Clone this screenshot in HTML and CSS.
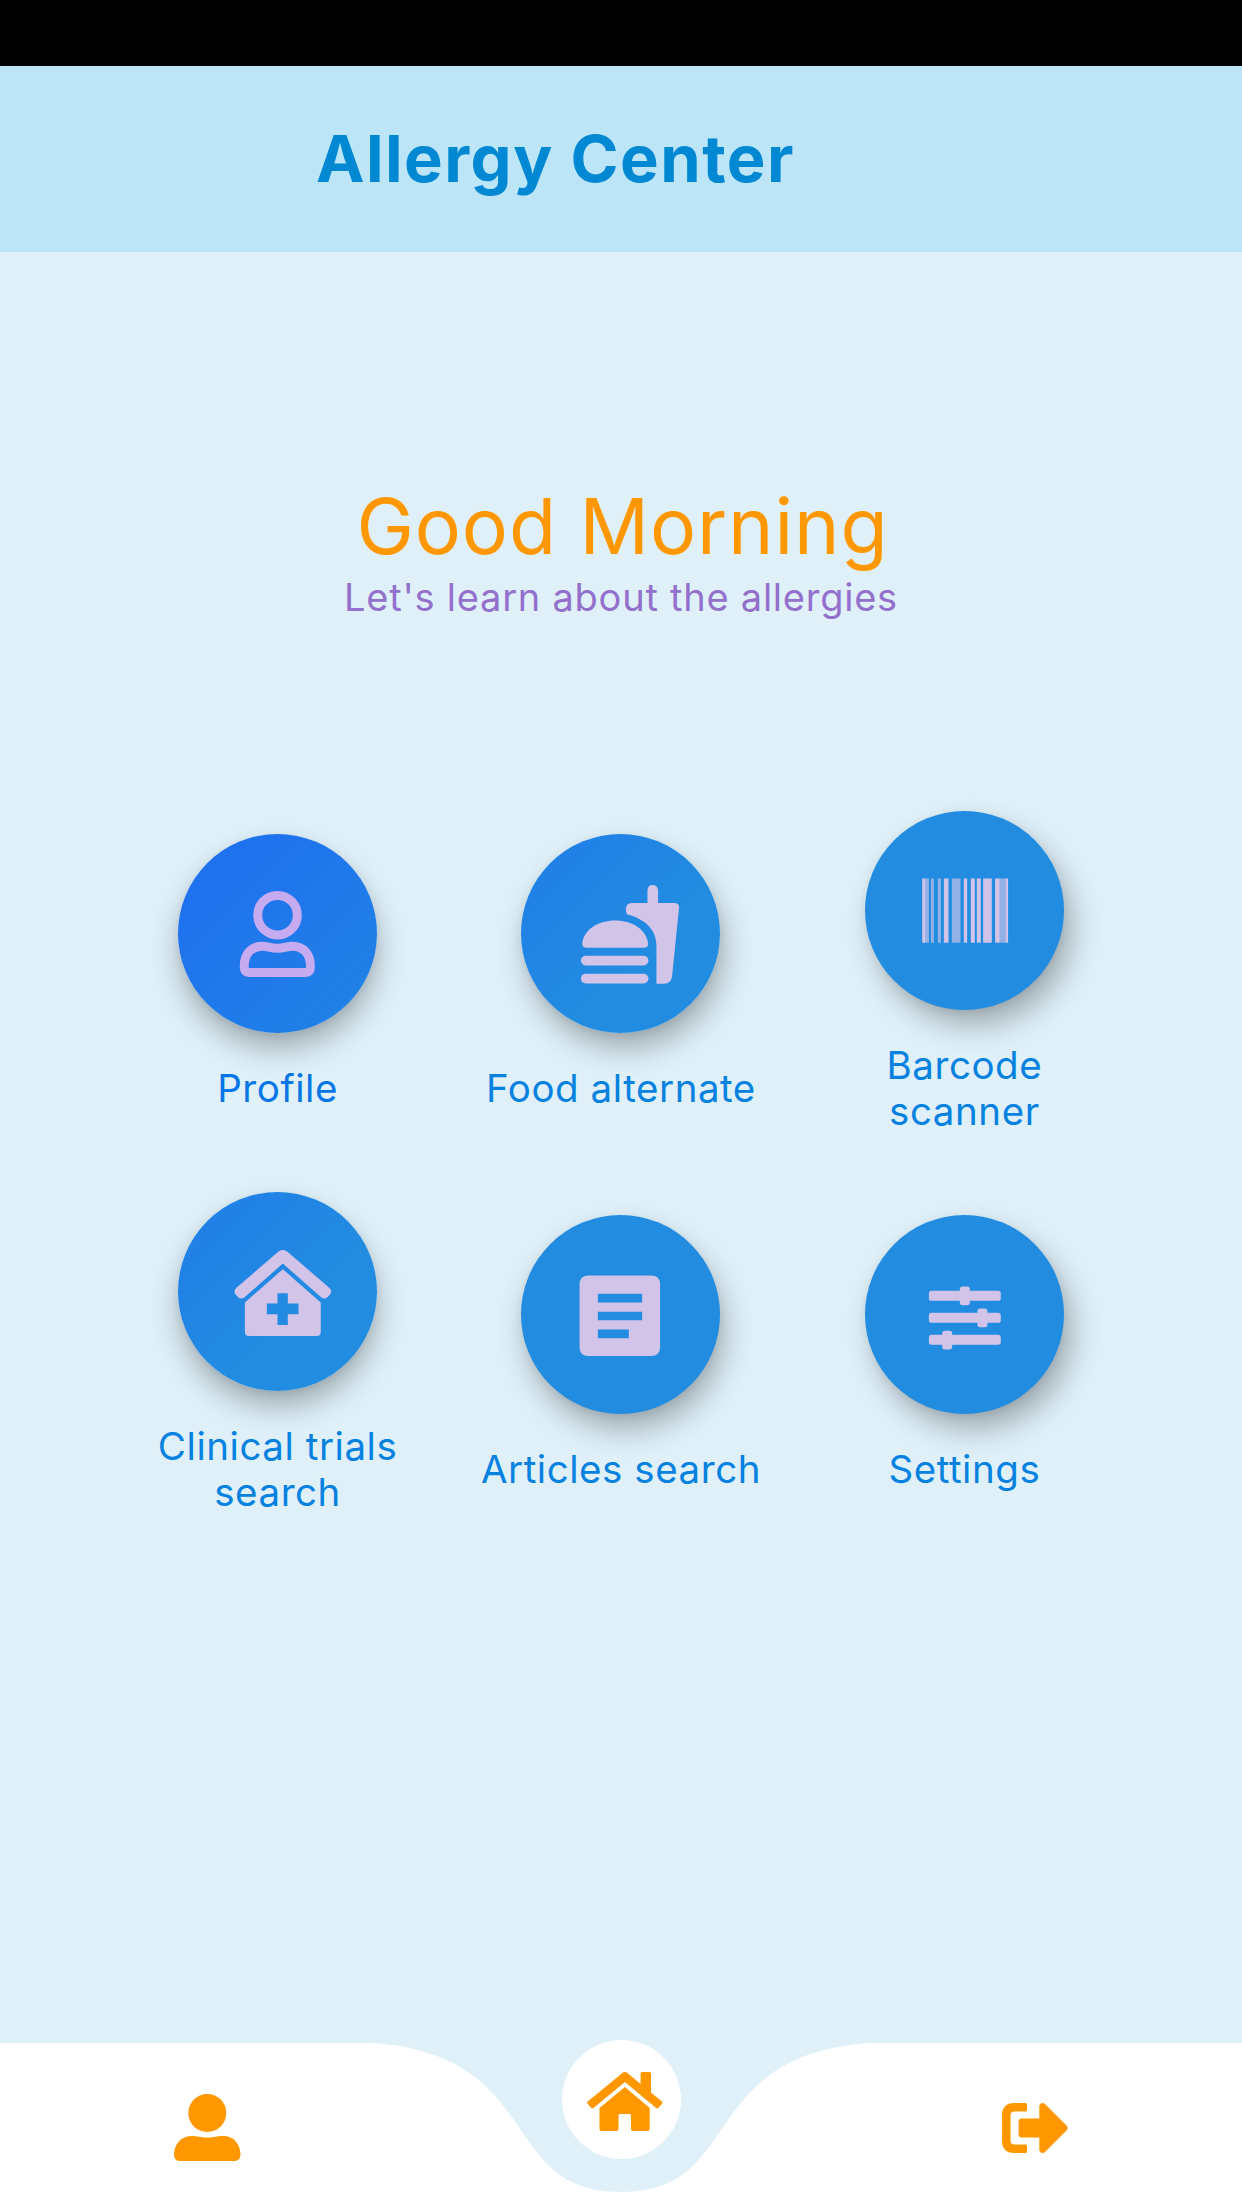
FILE: index.html
```
<!DOCTYPE html>
<html lang="en">
<head>
<meta charset="utf-8">
<title>Allergy Center</title>
<link rel="stylesheet" href="styles.css">
</head>
<body>
<div class="app">
  <div class="status-bar"></div>
  <header class="app-bar"><h1 class="title">Allergy Center</h1></header>

  <main class="content">
    <section class="greeting">
      <h2 class="greeting-title">Good Morning</h2>
      <p class="greeting-sub">Let's learn about the allergies</p>
    </section>

    <section class="menu">
      <a class="item left tint-profile">
        <svg class="disc" viewBox="85 70 598 598">
          <g fill="none" stroke="currentColor" stroke-width="27" stroke-linejoin="round">
            <circle cx="384" cy="314" r="59.5"/>
            <path d="M284 467C284 430 306 407 338 407C355 407 362 413 384 413C406 413 412 407 429 407C461 407 483 430 483 467C483 480 480 486 470 486H297C287 486 284 480 284 467Z"/>
          </g>
        </svg>
        <span class="label">Profile</span>
      </a>
      <a class="item center tint-mid">
        <svg class="disc" viewBox="185 70 598 598">
          <g fill="currentColor">
            <path d="M382 412Q369 412 369 399C373 357 418 330 468 330C518 330 562 357 567 399Q567 412 555 412Z"/>
            <rect x="365" y="436" width="203" height="29" rx="14.5"/>
            <rect x="365" y="490" width="203" height="29" rx="14.5"/>
            <path d="M565 277V238Q567 223 580 223Q595 223 597 238V277H648Q660 278 660 291L639 498Q636 519 614 520H592V405C592 358 558 325 503 311Q500 303 500 294Q502 278 517 277Z"/>
          </g>
        </svg>
        <span class="label">Food alternate</span>
      </a>
      <a class="item right">
        <svg class="disc" viewBox="75 61 598 598">
          <g fill="currentColor">
            <path d="M247 264h10v193h-10zM312 264h14v193h-14zM372 264h10v193h-10zM393 264h12v193h-12zM411 264h12v193h-12zM430 264h26v193h-26zM466 264h14v193h-14zM497 264h8v193h-8z"/>
            <path opacity=".65" d="M257 264h10v193h-10zM273 264h9v193h-9zM294 264h9v193h-9zM336 264h26v193h-26zM480 264h17v193h-17z"/>
          </g>
        </svg>
        <span class="label">Barcode<br>scanner</span>
      </a>
      <a class="item left tint-mid">
        <svg class="disc" viewBox="115 65 598 598">
          <path fill="currentColor" d="M418 243Q430 236 442 243L571 354Q579 363 572 373L564 381Q555 388 546 382L430 280L314 382Q304 388 296 381L288 373Q281 363 289 354Z"/>
          <path fill="currentColor" fill-rule="evenodd" d="M430 297L544 397V486Q544 498 532 498H328Q316 498 316 486V397ZM414 369V400H382V432H414V465H445V432H477V400H445V369Z"/>
        </svg>
        <span class="label">Clinical trials<br>search</span>
      </a>
      <a class="item center">
        <svg class="disc" viewBox="185 75 598 598">
          <path fill="currentColor" fill-rule="evenodd" d="M388 257H576Q603 257 603 284V472Q603 499 576 499H388Q361 499 361 472V284Q361 257 388 257ZM416 312V338H549V312ZM416 366V391H549V366ZM416 419V445H509V419Z"/>
        </svg>
        <span class="label">Articles search</span>
      </a>
      <a class="item right">
        <svg class="disc" viewBox="75 75 598 598">
          <g fill="currentColor">
            <rect x="267" y="303" width="216" height="30" rx="8"/>
            <rect x="267" y="369" width="216" height="30" rx="8"/>
            <rect x="267" y="435" width="216" height="30" rx="8"/>
            <rect x="360" y="290" width="30" height="56" rx="8"/>
            <rect x="413" y="356" width="30" height="56" rx="8"/>
            <rect x="307" y="423" width="30" height="56" rx="8"/>
          </g>
        </svg>
        <span class="label">Settings</span>
      </a>
    </section>
  </main>

  <nav class="nav">
    <svg class="nav-shape" viewBox="0 0 1242 166">
      <path fill="#fff" d="M0 0H372.6C546.5 12.4 496.8 149 621 149S695.5 12.4 869.4 0H1242V166H0Z"/>
    </svg>
    <a class="nav-item">
      <svg class="nav-user" viewBox="0 0 67 67">
        <circle cx="33.3" cy="19" r="19"/>
        <path d="M18 42C24 42 26 43.5 33.3 43.5S42 42 49 42C60 42 66.500 50 66.500 61Q66 67 60 67H6Q.5 67 0 61C0 50 7 42 18 42Z"/>
      </svg>
    </a>
    <a class="nav-item">
      <span class="home">
        <svg class="nav-home" viewBox="0 0 76 59">
          <path d="M34.8 1.4Q37.900-1.200 41 1.400L53.600 12V1.500Q53.600 0 55.100 0H62.500Q64 0 64 1.500V20.500L74.600 29.300Q76 30.500 74.800 32L71.500 35.700Q70.200 37 68.800 35.800L37.900 10L6.800 35.800Q5.400 37 4.100 35.700L.8 32Q-.4 30.500 1 29.300Z"/>
          <path d="M37.900 15L62.700 36V57Q62.700 59 60.700 59H46Q44 59 44 57V43.500Q44 42 42.500 42H33Q31.500 42 31.500 43.500V57Q31.500 59 29.500 59H14.500Q12.500 59 12.500 57V36Z"/>
        </svg>
      </span>
    </a>
    <a class="nav-item">
      <svg class="nav-exit" viewBox="0 0 66 50">
        <path d="M12.500 0H23.500Q25 0 25 1.500V7Q25 8.500 23.500 8.500H12.500Q8.500 8.500 8.500 12.500V37.500Q8.500 41.500 12.500 41.500H23.500Q25 41.500 25 43V48.500Q25 50 23.500 50H12.500Q0 50 0 37.500V12.500Q0 0 12.500 0Z"/>
        <path d="M19.500 15.600H37.300V3.500C37.300 0 41-1 43.300 1.200L64.500 22.500Q66.800 25 64.500 27.500L43.300 48.800C41 51 37.300 50 37.300 46.500V34.400H19.500Q16.600 34.400 16.600 31.500V18.500Q16.600 15.600 19.500 15.600Z"/>
      </svg>
    </a>
  </nav>
</div>
</body>
</html>
```
FILE: styles.css
```
* { box-sizing: border-box; margin: 0; padding: 0; }

body {
  font-family: Inter, "Liberation Sans", sans-serif;
  background: #dff0f9;
}

.app {
  width: 1242px;
  height: 2209px;
  display: flex;
  flex-direction: column;
  overflow: hidden;
}

.status-bar { height: 66px; background: #000; }

.app-bar {
  height: 186px;
  display: flex;
  align-items: center;
  padding: 0 0 1px 316px;
  background: #bce5f7;
}

.title {
  font-size: 65px;
  font-weight: 700;
  letter-spacing: 1.45px;
  color: #0088d2;
}

.content { flex: 1; padding-top: 227px; }

.greeting { height: 332px; text-align: center; }

.greeting-title {
  padding-left: 3px;
  font-size: 77px;
  line-height: 94px;
  font-weight: 400;
  letter-spacing: 0.9px;
  color: #ff9800;
}

.greeting-sub {
  margin-top: 1px;
  font-size: 38px;
  line-height: 46px;
  letter-spacing: 0.76px;
  color: #9370cc;
}

.menu {
  display: grid;
  grid-template-columns: repeat(3, 343.4px);
  justify-content: center;
  align-items: center;
  row-gap: 57.5px;
}

.item {
  display: flex;
  flex-direction: column;
  align-items: center;
  gap: 31.5px;
  --disc: #228ce1;
  --icon: #d2c4e8;
  --label: #0582e0;
  --shadow-x: 1px;
}

.item.center { --shadow-x: 5px; }
.item.right { --shadow-x: 9px; }

.tint-mid { --disc: linear-gradient(135deg, #207fe7 10%, #228ce1 60%); }

.tint-profile {
  --disc: linear-gradient(135deg, #1f70ef 12%, #2081e6 88%);
  --icon: #c6abf0;
  --label: #0576e5;
}

.disc {
  width: 199px;
  height: 199px;
  border-radius: 50%;
  background: var(--disc);
  color: var(--icon);
  box-shadow: var(--shadow-x) 16px 30px -2px rgba(0, 0, 0, 0.31), 0 2px 8px rgba(0, 0, 0, 0.06);
}

.label {
  font-size: 38.5px;
  line-height: 46.6px;
  letter-spacing: 0.55px;
  text-align: center;
  color: var(--label);
}

.nav {
  position: relative;
  height: 166px;
  display: grid;
  grid-template-columns: repeat(3, 1fr);
  justify-items: center;
}

.nav-shape {
  position: absolute;
  inset: 0;
  width: 1242px;
  height: 166px;
}

.nav-item { position: relative; fill: #ff9800; }

.nav-user { display: block; width: 67px; height: 67px; margin-top: 51px; }

.nav-exit { display: block; width: 66px; height: 50px; margin-top: 60px; }

.home {
  display: flex;
  align-items: center;
  justify-content: center;
  width: 119px;
  height: 119px;
  margin-top: -3px;
  padding: 4px 0 0 8px;
  border-radius: 50%;
  background: #fff;
}

.nav-home { width: 76px; height: 59px; }
```
